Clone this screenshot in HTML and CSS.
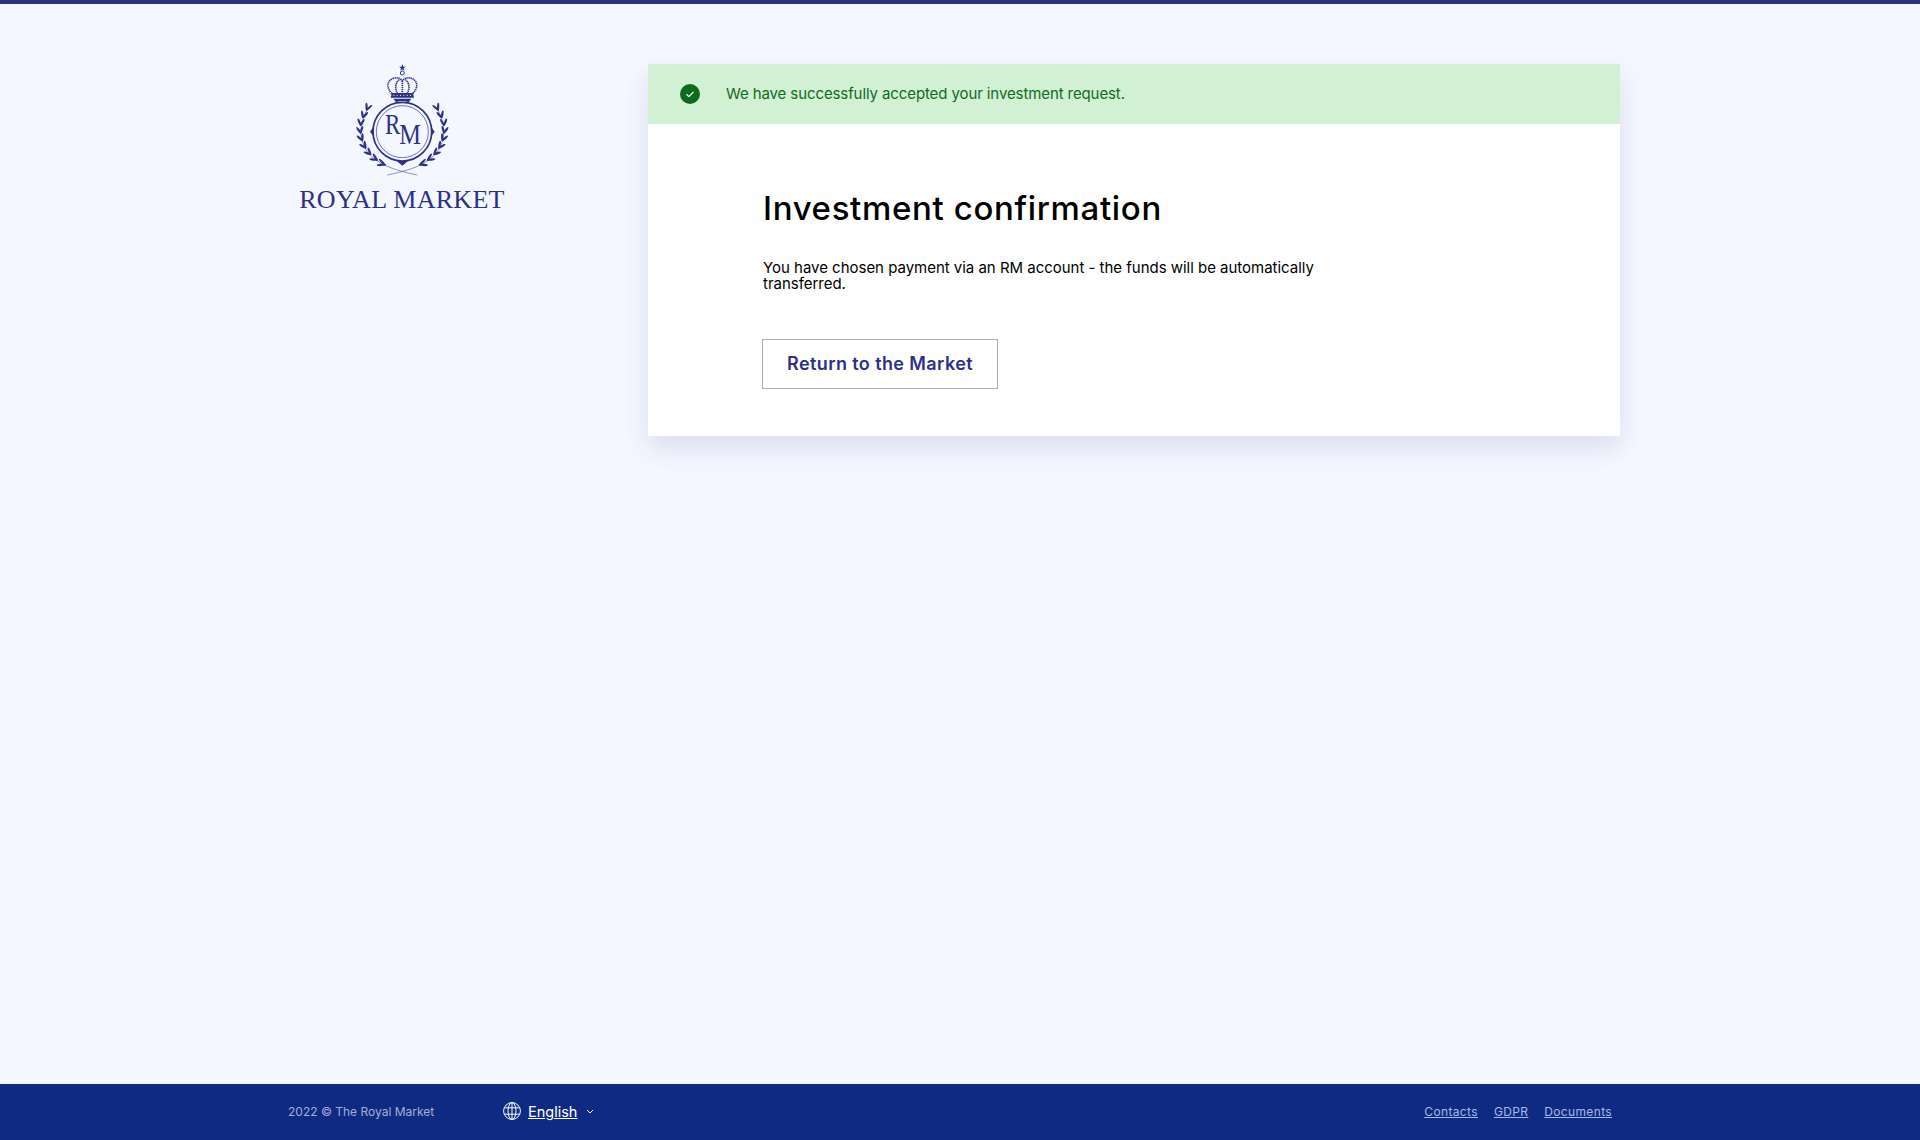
FILE: index.html
```html
<!DOCTYPE html>
<html lang="en">
<head>
<meta charset="utf-8">
<title>Investment confirmation</title>
<link rel="stylesheet" href="styles.css">
</head>
<body>
<main class="main">
  <aside class="brand">
    <svg class="crest" viewBox="0 27 375 348" width="125" height="116" aria-hidden="true">
      <defs>
        <g id="branch">
          <path class="spine" d="M84 158C58 205 55 250 82 290C110 328 160 345 232 360"/>
          <ellipse class="leaf" rx="12" ry="3.4" transform="translate(80 165) rotate(-42) translate(10 0)"/>
          <ellipse class="leaf" rx="12" ry="3.4" transform="translate(80 165) rotate(-92) translate(10 0)"/>
          <ellipse class="leaf" rx="12" ry="3.4" transform="translate(69 188) rotate(-48) translate(10 0)"/>
          <ellipse class="leaf" rx="12" ry="3.4" transform="translate(69 188) rotate(-100) translate(10 0)"/>
          <ellipse class="leaf" rx="12" ry="3.4" transform="translate(62 211) rotate(-60) translate(10 0)"/>
          <ellipse class="leaf" rx="12" ry="3.4" transform="translate(62 211) rotate(-112) translate(10 0)"/>
          <ellipse class="leaf" rx="12" ry="3.4" transform="translate(62 234) rotate(-75) translate(10 0)"/>
          <ellipse class="leaf" rx="12" ry="3.4" transform="translate(62 234) rotate(-125) translate(10 0)"/>
          <ellipse class="leaf" rx="12" ry="3.4" transform="translate(67 257) rotate(-88) translate(10 0)"/>
          <ellipse class="leaf" rx="12" ry="3.4" transform="translate(67 257) rotate(-138) translate(10 0)"/>
          <ellipse class="leaf" rx="12" ry="3.4" transform="translate(77 279) rotate(-100) translate(10 0)"/>
          <ellipse class="leaf" rx="12" ry="3.4" transform="translate(77 279) rotate(-150) translate(10 0)"/>
          <ellipse class="leaf" rx="12" ry="3.4" transform="translate(92 298) rotate(-112) translate(10 0)"/>
          <ellipse class="leaf" rx="12" ry="3.4" transform="translate(92 298) rotate(-162) translate(10 0)"/>
          <ellipse class="leaf" rx="13" ry="3.4" transform="translate(111 315) rotate(-122) translate(10 0)"/>
          <ellipse class="leaf" rx="13" ry="3.4" transform="translate(111 315) rotate(-172) translate(10 0)"/>
          <ellipse class="leaf" rx="14" ry="3.4" transform="translate(134 329) rotate(-135) translate(10 0)"/>
          <ellipse class="leaf" rx="14" ry="3.4" transform="translate(134 329) rotate(-185) translate(10 0)"/>
        </g>
      </defs>
      <use href="#branch"/>
      <use href="#branch" transform="translate(374 0) scale(-1 1)"/>
      <polygon class="fill" points="187,28 190,35 197,35 191,40 193,47 187,43 181,47 183,40 177,35 184,35"/>
      <circle class="line2" cx="187" cy="54" r="6"/>
      <path class="line3 dotted" d="M156 116C140 100 138 78 160 70C172 66 182 70 187 78C192 70 202 66 214 70C236 78 234 100 218 116"/>
      <path class="line3 dotted" d="M187 78V116M172 116C164 100 166 82 178 74M202 116C210 100 208 82 196 74"/>
      <path class="fill" d="M155 114H219L222 128H152Z"/>
      <path class="dots" d="M160 121H215"/>
      <path class="fill" d="M160 131H214L206 142Q187 134 168 142Z"/>
      <circle class="line5" cx="187" cy="230" r="88"/>
      <circle class="line1" cx="187" cy="230" r="78"/>
      <path class="fill" d="M90 230L100 216V244ZM284 230L274 216V244ZM187 332L170 318H204Z"/>
      <text class="rm" x="135" y="236" textLength="46" lengthAdjust="spacingAndGlyphs">R</text>
      <text class="rm" x="178" y="267" textLength="65" lengthAdjust="spacingAndGlyphs">M</text>
    </svg>
    <div class="wordmark">ROYAL MARKET</div>
  </aside>
  <section class="card">
    <div class="alert">
      <svg class="alert-icon" viewBox="0 0 20 20" width="20" height="20" aria-hidden="true">
        <circle cx="10" cy="10" r="10" fill="#0f6b1c"/>
        <path d="M6.5 10.3L8.9 12.6L13.5 7.8" fill="none" stroke="#fff" stroke-width="1.2"/>
      </svg>
      <span class="alert-text">We have successfully accepted your investment request.</span>
    </div>
    <div class="card-body">
      <h1 class="title">Investment confirmation</h1>
      <p class="lead">You have chosen payment via an RM account - the funds will be automatically transferred.</p>
      <a class="button" href="#">Return to the Market</a>
    </div>
  </section>
</main>
<footer class="footer">
  <span class="copy">2022 © The Royal Market</span>
  <div class="lang">
    <svg viewBox="0 0 18 18" width="18" height="18" aria-hidden="true" class="globe">
      <circle cx="9" cy="9" r="8.4"/>
      <ellipse cx="9" cy="9" rx="4" ry="8.4"/>
      <path d="M9 .6V17.4M1.4 5.8H16.6M1.4 12.2H16.6"/>
    </svg>
    <a class="lang-link" href="#">English</a>
    <svg viewBox="0 0 8 5" width="8" height="5" aria-hidden="true" class="chev"><path d="M1 1L4 4L7 1"/></svg>
  </div>
  <nav class="links">
    <a href="#">Contacts</a>
    <a href="#">GDPR</a>
    <a href="#">Documents</a>
  </nav>
</footer>
</body>
</html>
```

FILE: styles.css
```css
* { box-sizing: border-box; }
html, body { height: 100%; }
body {
  margin: 0;
  min-height: 1140px;
  display: flex;
  flex-direction: column;
  background: #f4f7ff;
  border-top: 4px solid #2b3183;
  font-family: Inter, "Open Sans", sans-serif;
  color: #000;
}
.main {
  flex: 1;
  display: flex;
  align-items: flex-start;
  padding: 60px 0 0 280px;
}
.brand {
  width: 368px;
  padding-right: 124px;
  display: flex;
  flex-direction: column;
  align-items: center;
  flex: none;
}
.crest { display: block; flex: none; }
.spine { fill: none; stroke: #2b3183; stroke-width: 1.5; }
.leaf, .fill { fill: #2b3183; }
.line1, .line2, .line3, .line5 { fill: none; stroke: #2b3183; }
.line1 { stroke-width: 2; }
.line2 { stroke-width: 3; }
.line3 { stroke-width: 5; }
.line5 { stroke-width: 5; }
.dotted { stroke-dasharray: 4 2; }
.dots { fill: none; stroke: #f4f7ff; stroke-width: 3; stroke-dasharray: 3 7; }
.rm { font-family: "Liberation Serif", serif; font-size: 88px; fill: #2b3183; }
.wordmark {
  margin-top: 5px;
  font-family: "Liberation Serif", serif;
  font-size: 26px;
  line-height: 30px;
  letter-spacing: 0.3px;
  color: #2b3183;
  white-space: nowrap;
}
.card {
  width: 972px;
  flex: none;
  background: #fff;
  box-shadow: 0 12px 24px rgba(43, 49, 131, 0.12);
}
.alert {
  height: 60px;
  display: flex;
  align-items: center;
  gap: 26px;
  padding-left: 32px;
  background: #d1f0d4;
  color: #0f6b1c;
  font-size: 15px;
  letter-spacing: -0.1px;
}
.alert-icon { flex: none; }
.alert-text { margin-bottom: 1px; }
.card-body { padding: 64px 115px 47px; }
.title {
  margin: 0;
  font-size: 33px;
  line-height: 40px;
  font-weight: 500;
  letter-spacing: 0.65px;
}
.lead {
  margin: 32px 0 0;
  width: 560px;
  font-size: 15px;
  line-height: 16px;
  letter-spacing: -0.02px;
}
.button {
  display: inline-flex;
  align-items: center;
  justify-content: center;
  margin: 47px 0 0 -1px;
  padding-bottom: 1px;
  width: 236px;
  height: 50px;
  border: 1px solid #aeaeb2;
  color: #2b3183;
  font-size: 18px;
  font-weight: 600;
  letter-spacing: 0.4px;
  text-decoration: none;
}
.footer {
  flex: none;
  height: 56px;
  display: flex;
  align-items: center;
  padding: 0 308px 2px 288px;
  background: #0f2a82;
  font-size: 12px;
}
.copy { width: 215px; color: #a3b0d9; }
.lang { display: flex; align-items: center; gap: 7px; color: #fff; }
.globe { fill: none; stroke: #fff; stroke-width: 1; }
.chev { fill: none; stroke: #fff; stroke-width: 1; margin-left: 2px; }
.lang-link { color: #fff; font-size: 14.5px; }
.links { margin-left: auto; display: flex; gap: 16px; letter-spacing: 0.35px; }
.links a { color: #a9b9ea; }
```
